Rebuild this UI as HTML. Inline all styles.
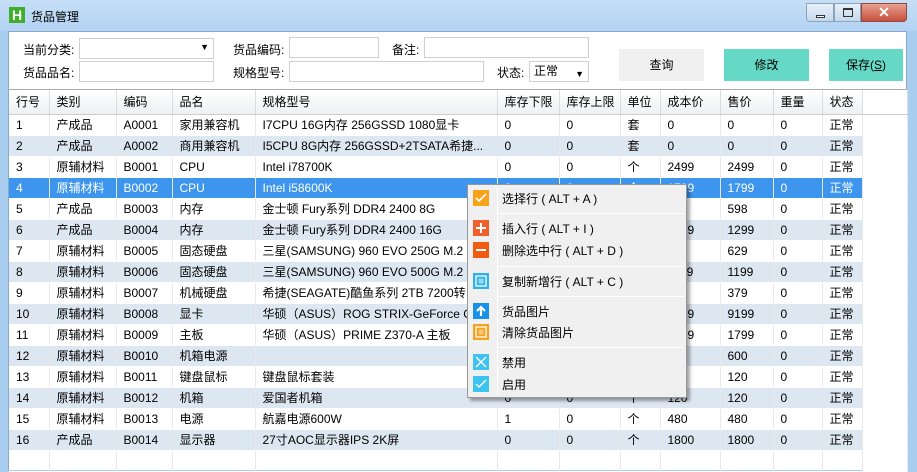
<!DOCTYPE html><html><head><meta charset="utf-8"><style>
*{margin:0;padding:0;box-sizing:border-box}
body{width:917px;height:470px;overflow:hidden;font-family:"Liberation Sans","Noto Sans CJK SC",sans-serif;font-size:12px;color:#000;background:#a9cdee;position:relative}
.abs{position:absolute}
#title{left:0;top:0;width:917px;height:31px;background:linear-gradient(#c6dff6,#b3d3f3)}
#client{left:8px;top:31px;width:899px;height:439px;background:#fff;border:1px solid #8aa8c8;border-bottom:none}
input,.box{position:absolute;border:1px solid #cfcfcf;background:#fff;height:21px}
.lbl{position:absolute;font-size:12px}
.btn{position:absolute;width:85px;height:32px;text-align:center;line-height:32px;font-size:12px}
table{position:absolute;left:9px;top:90px;border-collapse:collapse;table-layout:fixed}
td{height:21px;padding-left:7px;white-space:nowrap;overflow:hidden;border-right:1px solid #e8e8e8;border-bottom:1px solid #fff}
tr.h td{height:24px;background:linear-gradient(#fff,#eef0f3);border-right:1px solid #dcdcdc;border-bottom:1px solid #ccc}
tr.a td{background:#dde7f1}
tr.a td:last-child,tr.s td:last-child,tr td:last-child{background:#fff}
tr.s td{background:#3d95ee;color:#fff}
#menu{left:467px;top:184px;width:220px;height:214px;background:#f0f0f0;border:1px solid #979797;box-shadow:3px 3px 3px rgba(0,0,0,.35)}
.mi{position:absolute;left:34px;font-size:12px}
.ic{position:absolute;left:5px;width:16px;height:16px}
.sep{position:absolute;left:30px;width:186px;height:1px;background:#d8d8d8;border-bottom:1px solid #fff}
</style></head><body>
<div id="title" class="abs"></div>
<div class="abs" style="left:9px;top:7px;width:16px;height:16px;background:#3fae2a;color:#fff;font-weight:bold;font-size:14px;line-height:16px;text-align:center">H</div>
<div class="abs" style="left:31px;top:8px;font-size:12px">货品管理</div>
<div class="abs" style="left:806px;top:3px;width:28px;height:19px;border:1px solid #8da4bd;border-radius:0 0 0 4px;background:linear-gradient(#e8f1fb,#c5d8ec)"><div class="abs" style="left:9px;top:11px;width:9px;height:3px;border:1px solid #333;background:#fff"></div></div>
<div class="abs" style="left:834px;top:3px;width:27px;height:19px;border:1px solid #8da4bd;background:linear-gradient(#e8f1fb,#c5d8ec)"><div class="abs" style="left:8px;top:4px;width:10px;height:9px;border:1px solid #333;border-top-width:2px"></div></div>
<div class="abs" style="left:861px;top:3px;width:46px;height:19px;border:1px solid #8d4a40;border-radius:0 0 4px 0;background:linear-gradient(#e8a293,#c7503a);color:#fff;font-weight:bold;text-align:center;font-size:14px;line-height:17px">✕</div>
<div id="client" class="abs"></div>
<div class="lbl" style="left:23px;top:41px">当前分类:</div>
<div class="box" style="left:79px;top:38px;width:135px"><span class="abs" style="right:4px;top:3px;font-size:9px">▼</span></div>
<div class="lbl" style="left:233px;top:41px">货品编码:</div>
<div class="box" style="left:289px;top:37px;width:90px"></div>
<div class="lbl" style="left:392px;top:41px">备注:</div>
<div class="box" style="left:424px;top:37px;width:165px"></div>
<div class="lbl" style="left:23px;top:64px">货品品名:</div>
<div class="box" style="left:79px;top:61px;width:135px"></div>
<div class="lbl" style="left:233px;top:64px">规格型号:</div>
<div class="box" style="left:289px;top:61px;width:195px"></div>
<div class="lbl" style="left:497px;top:64px">状态:</div>
<div class="box" style="left:529px;top:61px;width:60px;padding-left:4px;line-height:19px">正常<span class="abs" style="right:4px;top:3px;font-size:9px">▼</span></div>
<div class="btn" style="left:619px;top:49px;background:#f0f0f0">查询</div>
<div class="btn" style="left:724px;top:49px;background:#66d8c6">修改</div>
<div class="btn" style="left:829px;top:49px;width:74px;background:#66d8c6">保存(<u>S</u>)</div>
<div class="abs" style="left:9px;top:89px;width:898px;height:1px;background:#aaa"></div>
<table>
<colgroup><col style="width:40px"><col style="width:67px"><col style="width:56px"><col style="width:83px"><col style="width:242px"><col style="width:62px"><col style="width:61px"><col style="width:40px"><col style="width:60px"><col style="width:53px"><col style="width:49px"><col style="width:40px"><col style="width:45px"></colgroup>
<tr class="h"><td>行号</td><td>类别</td><td>编码</td><td>品名</td><td>规格型号</td><td>库存下限</td><td>库存上限</td><td>单位</td><td>成本价</td><td>售价</td><td>重量</td><td>状态</td><td></td></tr>
<tr><td>1</td><td>产成品</td><td>A0001</td><td>家用兼容机</td><td>I7CPU 16G内存 256GSSD 1080显卡</td><td>0</td><td>0</td><td>套</td><td>0</td><td>0</td><td>0</td><td>正常</td><td></td></tr>
<tr class="a"><td>2</td><td>产成品</td><td>A0002</td><td>商用兼容机</td><td>I5CPU 8G内存 256GSSD+2TSATA希捷...</td><td>0</td><td>0</td><td>套</td><td>0</td><td>0</td><td>0</td><td>正常</td><td></td></tr>
<tr><td>3</td><td>原辅材料</td><td>B0001</td><td>CPU</td><td>Intel i78700K</td><td>0</td><td>0</td><td>个</td><td>2499</td><td>2499</td><td>0</td><td>正常</td><td></td></tr>
<tr class="s"><td>4</td><td>原辅材料</td><td>B0002</td><td>CPU</td><td>Intel i58600K</td><td>0</td><td>0</td><td>个</td><td>1799</td><td>1799</td><td>0</td><td>正常</td><td></td></tr>
<tr><td>5</td><td>产成品</td><td>B0003</td><td>内存</td><td>金士顿 Fury系列 DDR4 2400 8G</td><td>0</td><td>0</td><td>个</td><td>598</td><td>598</td><td>0</td><td>正常</td><td></td></tr>
<tr class="a"><td>6</td><td>产成品</td><td>B0004</td><td>内存</td><td>金士顿 Fury系列 DDR4 2400 16G</td><td>0</td><td>0</td><td>个</td><td>1299</td><td>1299</td><td>0</td><td>正常</td><td></td></tr>
<tr><td>7</td><td>原辅材料</td><td>B0005</td><td>固态硬盘</td><td>三星(SAMSUNG) 960 EVO 250G M.2</td><td>0</td><td>0</td><td>个</td><td>629</td><td>629</td><td>0</td><td>正常</td><td></td></tr>
<tr class="a"><td>8</td><td>原辅材料</td><td>B0006</td><td>固态硬盘</td><td>三星(SAMSUNG) 960 EVO 500G M.2</td><td>0</td><td>0</td><td>个</td><td>1199</td><td>1199</td><td>0</td><td>正常</td><td></td></tr>
<tr><td>9</td><td>原辅材料</td><td>B0007</td><td>机械硬盘</td><td>希捷(SEAGATE)酷鱼系列 2TB 7200转</td><td>0</td><td>0</td><td>个</td><td>379</td><td>379</td><td>0</td><td>正常</td><td></td></tr>
<tr class="a"><td>10</td><td>原辅材料</td><td>B0008</td><td>显卡</td><td>华硕（ASUS）ROG STRIX-GeForce GTX</td><td>0</td><td>0</td><td>个</td><td>9199</td><td>9199</td><td>0</td><td>正常</td><td></td></tr>
<tr><td>11</td><td>原辅材料</td><td>B0009</td><td>主板</td><td>华硕（ASUS）PRIME Z370-A 主板</td><td>0</td><td>0</td><td>个</td><td>1799</td><td>1799</td><td>0</td><td>正常</td><td></td></tr>
<tr class="a"><td>12</td><td>原辅材料</td><td>B0010</td><td>机箱电源</td><td></td><td>0</td><td>0</td><td>个</td><td>600</td><td>600</td><td>0</td><td>正常</td><td></td></tr>
<tr><td>13</td><td>原辅材料</td><td>B0011</td><td>键盘鼠标</td><td>键盘鼠标套装</td><td>0</td><td>0</td><td>个</td><td>120</td><td>120</td><td>0</td><td>正常</td><td></td></tr>
<tr class="a"><td>14</td><td>原辅材料</td><td>B0012</td><td>机箱</td><td>爱国者机箱</td><td>0</td><td>0</td><td>个</td><td>120</td><td>120</td><td>0</td><td>正常</td><td></td></tr>
<tr><td>15</td><td>原辅材料</td><td>B0013</td><td>电源</td><td>航嘉电源600W</td><td>1</td><td>0</td><td>个</td><td>480</td><td>480</td><td>0</td><td>正常</td><td></td></tr>
<tr class="a"><td>16</td><td>产成品</td><td>B0014</td><td>显示器</td><td>27寸AOC显示器IPS 2K屏</td><td>0</td><td>0</td><td>个</td><td>1800</td><td>1800</td><td>0</td><td>正常</td><td></td></tr>
<tr><td></td><td></td><td></td><td></td><td></td><td></td><td></td><td></td><td></td><td></td><td></td><td></td><td></td></tr>
</table>
<div id="menu" class="abs">
<div class="abs" style="left:29px;top:2px;width:1px;height:208px;background:#d8d8d8;border-right:1px solid #fff"></div>
<svg class="ic" style="top:5px" viewBox="0 0 16 16"><rect width="16" height="16" fill="#f7a21b"/><path d="M3 8l3 3 7-7" stroke="#fff" stroke-width="1.6" fill="none"/></svg>
<div class="mi" style="top:5px">选择行 ( ALT + A )</div>
<div class="sep" style="top:28px"></div>
<svg class="ic" style="top:35px" viewBox="0 0 16 16"><rect width="16" height="16" fill="#f0602c"/><path d="M8 3v10M3 8h10" stroke="#fff" stroke-width="2"/></svg>
<div class="mi" style="top:35px">插入行 ( ALT + I )</div>
<svg class="ic" style="top:57px" viewBox="0 0 16 16"><rect width="16" height="16" fill="#f25c12"/><path d="M3 8h10" stroke="#fff" stroke-width="2"/></svg>
<div class="mi" style="top:57px">删除选中行 ( ALT + D )</div>
<div class="sep" style="top:81px"></div>
<svg class="ic" style="top:88px" viewBox="0 0 16 16"><rect width="16" height="16" fill="#2cb3ef"/><rect x="3" y="3" width="10" height="10" fill="none" stroke="#fff" stroke-width="1.3"/><rect x="5.5" y="5.5" width="5" height="5" fill="#fff" opacity=".5"/></svg>
<div class="mi" style="top:88px">复制新增行 ( ALT + C )</div>
<div class="sep" style="top:111px"></div>
<svg class="ic" style="top:118px" viewBox="0 0 16 16"><rect width="16" height="16" fill="#1690e8"/><path d="M8 13V5M4 8l4-4 4 4" stroke="#fff" stroke-width="2.2" fill="none"/></svg>
<div class="mi" style="top:118px">货品图片</div>
<svg class="ic" style="top:139px" viewBox="0 0 16 16"><rect width="16" height="16" fill="#f7a21b"/><rect x="3" y="3" width="10" height="10" fill="none" stroke="#fff" stroke-width="1.3"/><rect x="5.5" y="5.5" width="5" height="5" fill="#fff" opacity=".4"/></svg>
<div class="mi" style="top:139px">清除货品图片</div>
<div class="sep" style="top:162px"></div>
<svg class="ic" style="top:169px" viewBox="0 0 16 16"><rect width="16" height="16" fill="#3cc3ef"/><path d="M3 3l10 10M13 3L3 13" stroke="#fff" stroke-width="1.4"/></svg>
<div class="mi" style="top:169px">禁用</div>
<svg class="ic" style="top:191px" viewBox="0 0 16 16"><rect width="16" height="16" fill="#3cc3ef"/><path d="M3 8l3 3 7-7" stroke="#fff" stroke-width="1.4" fill="none"/></svg>
<div class="mi" style="top:191px">启用</div>
</div>
</body></html>
